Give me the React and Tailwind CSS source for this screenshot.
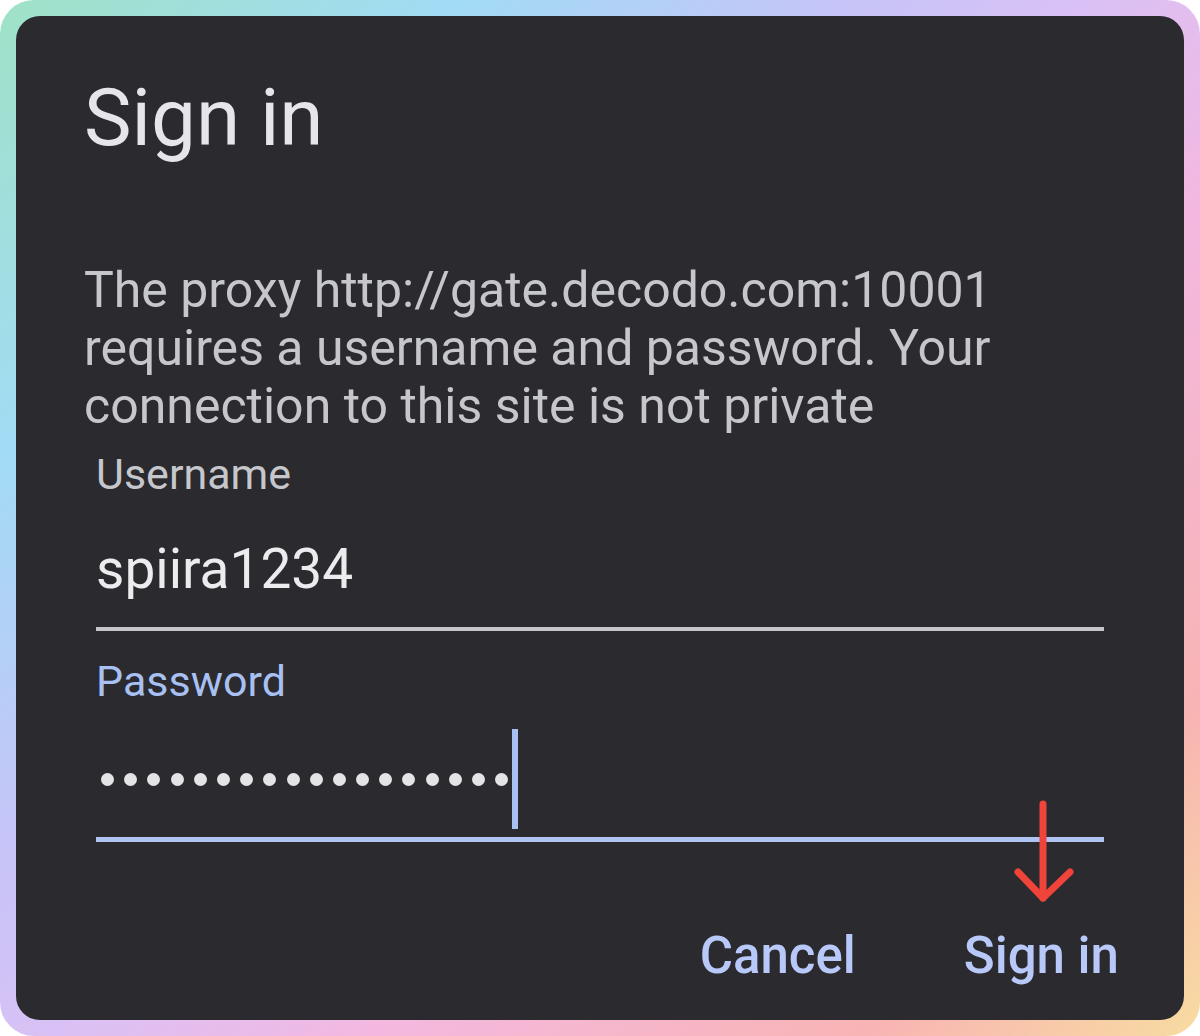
import React from "react";

const F = { fontFamily: "Roboto, 'Noto Sans', sans-serif" };

export default function App() {
  const dots = Array.from({ length: 18 });
  return (
    <div
      className="relative w-[1200px] h-[1036px] p-4 rounded-[34px] bg-[linear-gradient(135deg,#9fe2c6_0%,#a0dcf4_20%,#c6c4f8_38%,#dcc0f4_50%,#f4b8e0_63%,#f8b4b4_85%,#f8dca0_100%)]"
      style={F}
    >
      <div className="w-full h-full bg-[#2a2a2f] rounded-[24px] pl-[68px] pr-[80px] pt-[54px] flex flex-col">
        <h1 className="text-[80px] leading-[96px] text-[#e6e6ea] font-normal">Sign in</h1>
        <p className="mt-[95px] text-[50px] leading-[58px] text-[#c6c7cc]">
          The proxy http://gate.decodo.com:10001 requires a username and password. Your connection to this site is not private
        </p>
        <div className="pl-3 mt-[15px]">
          <div className="text-[43px] leading-[48px] text-[#c6c7cc]">Username</div>
          <div className="mt-[38px] text-[55px] leading-[66px] text-[#ececef]">spiira1234</div>
          <div className="mt-[25px] h-[4px] bg-[#c4c6ca]"></div>
          <div className="mt-[26px] text-[43px] leading-[48px] text-[#a8c0f2]">Password</div>
          <div className="mt-[24px] h-[100px] flex items-center">
            <div className="flex items-center gap-[10.2px] pl-[5px]">
              {dots.map((_, i) => (
                <span key={i} className="block w-[13px] h-[13px] rounded-full bg-[#e4e4e6]"></span>
              ))}
            </div>
            <div className="ml-[4px] w-[6px] h-[100px] bg-[#a8c0f2]"></div>
          </div>
          <div className="mt-[8px] h-[5px] bg-[#b0c4f4]"></div>
        </div>
        <div className="mt-[84px] flex justify-end gap-[108px] -mr-[15px] text-[51px] leading-[60px] font-medium text-[#b8c8f8]">
          <span>Cancel</span>
          <span>Sign in</span>
        </div>
      </div>
      <svg className="absolute left-[1010px] top-[800px]" width="70" height="110" viewBox="0 0 70 110">
        <path d="M33 4 V98" stroke="#f0443a" strokeWidth="7" strokeLinecap="round" fill="none" />
        <path d="M8 72 L33 98 L60 72" stroke="#f0443a" strokeWidth="7" strokeLinecap="round" strokeLinejoin="round" fill="none" />
      </svg>
    </div>
  );
}
